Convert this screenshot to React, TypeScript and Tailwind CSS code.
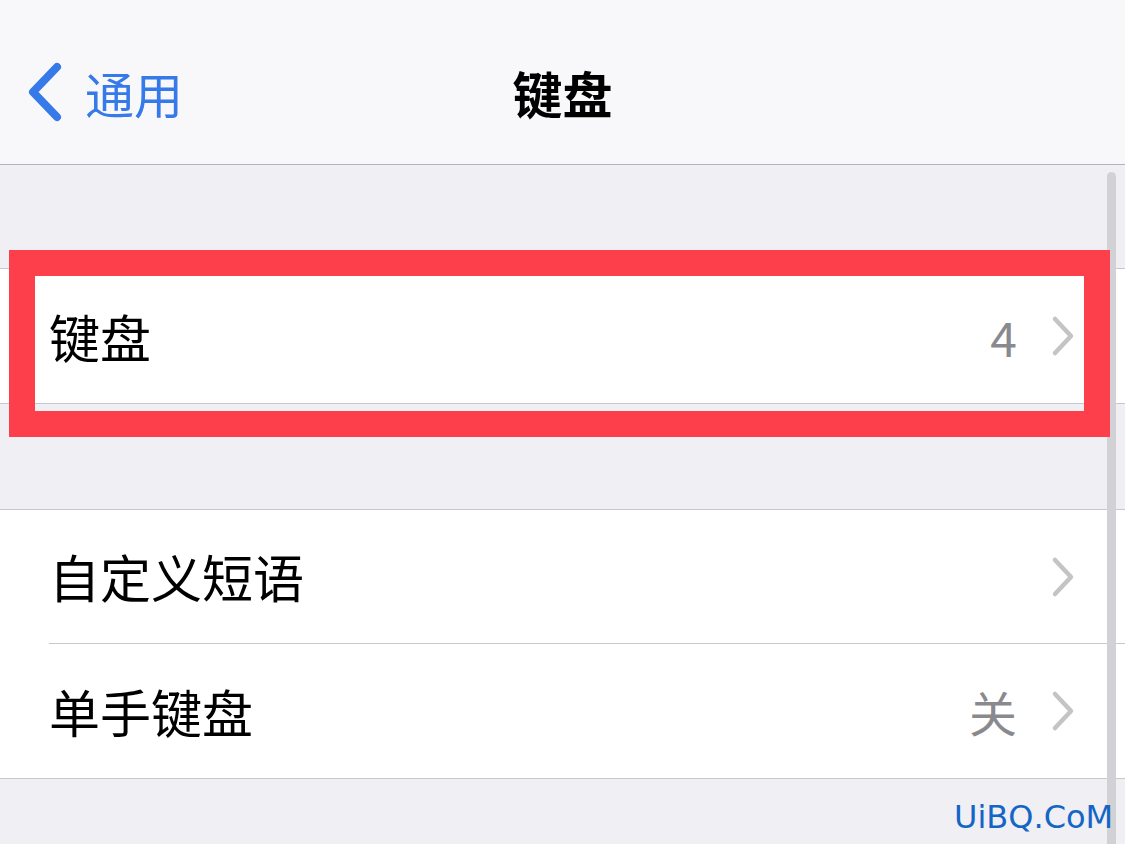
const rows2 = [
  { label: "自定义短语", value: "" },
  { label: "单手键盘", value: "关" },
];

function Chevron() {
  return (
    <svg width="24" height="42" viewBox="0 0 24 42" className="shrink-0">
      <path
        d="M4 4 L20 21 L4 38"
        fill="none"
        stroke="#c4c4c7"
        strokeWidth="4.5"
        strokeLinecap="round"
        strokeLinejoin="round"
      />
    </svg>
  );
}

function Row({ label, value, last }: { label: string; value: string; last?: boolean }) {
  return (
    <div className="flex h-[134px] items-center pl-[49px]">
      <div
        className={
          "flex h-full flex-1 items-center pr-[50px] " +
          (last ? "" : "border-b border-[#c8c8cc]")
        }
      >
        <span className="flex-1 text-[51px] leading-none text-black">{label}</span>
        {value && (
          <span className="mr-[34px] text-[48px] leading-none text-[#8a8a8e]">{value}</span>
        )}
        <Chevron />
      </div>
    </div>
  );
}

export default function App() {
  return (
    <div
      className="relative h-[844px] w-[1125px] overflow-hidden bg-[#efeff4]"
      style={{ fontFamily: '"Noto Sans CJK SC", "Noto Sans", sans-serif' }}
    >
      {/* Nav bar */}
      <div className="relative flex h-[165px] items-center border-b border-[#b4b4b8] bg-[#f8f8fa] pt-[20px]">
        <div className="flex items-center pl-[27px] text-[#3679e8]">
          <svg width="36" height="60" viewBox="0 0 36 60">
            <path
              d="M30 5 L6 30 L30 55"
              fill="none"
              stroke="#3679e8"
              strokeWidth="8"
              strokeLinecap="round"
              strokeLinejoin="round"
            />
          </svg>
          <span className="ml-[22px] text-[49px] leading-none">通用</span>
        </div>
        <div className="absolute inset-x-0 top-0 flex h-full items-center justify-center pt-[20px] pointer-events-none">
          <span className="text-[50px] font-semibold leading-none text-black">键盘</span>
        </div>
      </div>

      {/* Group 1 */}
      <div className="mt-[103px] border-y border-[#c8c8cc] bg-white">
        <Row label="键盘" value="4" last />
      </div>

      {/* Group 2 */}
      <div className="mt-[105px] border-y border-[#c8c8cc] bg-white">
        <Row label={rows2[0].label} value={rows2[0].value} />
        <Row label={rows2[1].label} value={rows2[1].value} last />
      </div>

      {/* Scroll indicator */}
      <div className="absolute left-[1107px] top-[172px] h-[700px] w-[9px] rounded-full bg-[#d2d2d6]" />

      {/* Red highlight annotation */}
      <div className="absolute left-[9px] top-[250px] h-[187px] w-[1101px] border-[26px] border-[#fd3f4c]" />

      {/* Watermark */}
      <div
        className="absolute left-[954px] top-[801px] text-[32px] leading-none text-[#1465c6]"
        style={{ fontFamily: '"DejaVu Sans", sans-serif' }}
      >
        UiBQ.CoM
      </div>
    </div>
  );
}
